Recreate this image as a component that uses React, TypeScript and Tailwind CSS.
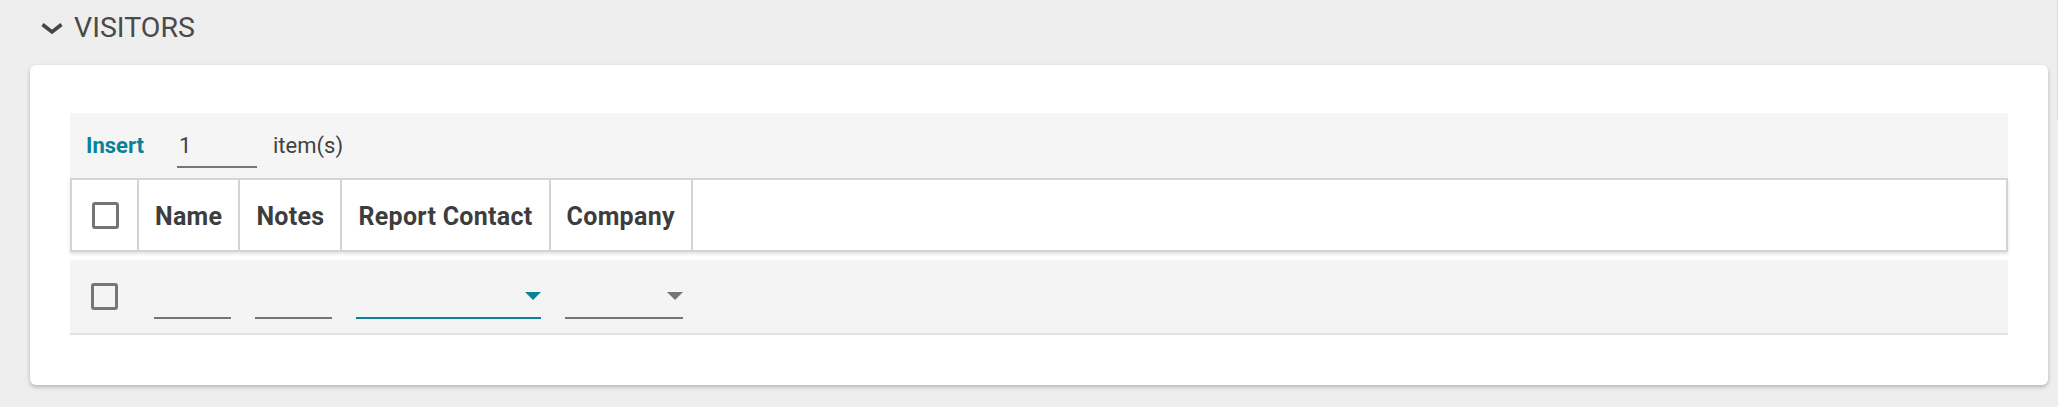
import { useState } from "react";

const TEAL = "#0b8197";

function Checkbox() {
  return (
    <div className="w-[27px] h-[27px] border-[3px] border-[#757575] rounded-[3px] bg-transparent" />
  );
}

function SelectField({ width, active }: { width: string; active?: boolean }) {
  return (
    <div
      className={`${width} h-[44px] flex items-center justify-end border-b-2 ${
        active ? "border-[#0b8197]" : "border-[#757575]"
      }`}
    >
      <div
        className={`w-0 h-0 border-l-[8px] border-r-[8px] border-t-[8px] border-l-transparent border-r-transparent ${
          active ? "border-t-[#0b8197]" : "border-t-[#757575]"
        }`}
      />
    </div>
  );
}

export default function App() {
  const [count, setCount] = useState("1");
  const columns = ["Name", "Notes", "Report Contact", "Company"];

  return (
    <div className="relative min-h-[407px] bg-[#eeeeee] font-['Roboto',sans-serif] text-[#424242]">
      {/* scrollbar edge */}
      <div className="absolute right-0 top-0 w-px h-[120px] bg-[#dcdcdc]" />

      {/* Section title */}
      <div className="h-[56px] flex items-center pl-[40px] gap-[10px]">
        <svg width="24" height="13" viewBox="0 0 24 13" fill="none">
          <polyline
            points="2.5,2.5 12,10 21.5,2.5"
            stroke="#454545"
            strokeWidth="3.6"
            fill="none"
          />
        </svg>
        <span className="text-[28.5px] leading-[32px] text-[#4a4a4a]">VISITORS</span>
      </div>

      {/* Card */}
      <div className="ml-[30px] mr-[10px] mt-[9px] bg-white rounded-[6px] shadow-[0_2px_4px_rgba(0,0,0,0.25)] pt-[48px] px-[40px] pb-[50px]">
        {/* Insert bar */}
        <div className="h-[65px] bg-[#f5f5f5] flex items-center pl-[16px]">
          <span className="text-[22px] font-bold" style={{ color: TEAL }}>
            Insert
          </span>
          <input
            value={count}
            onChange={(e) => setCount(e.target.value)}
            className="ml-[33px] w-[80px] h-[45px] pl-[2px] pt-[1px] bg-transparent border-b-2 border-[#757575] text-[22px] text-[#424242] outline-none"
          />
          <span className="ml-[16px] text-[22px] text-[#424242]">item(s)</span>
        </div>

        {/* Header */}
        <div className="flex h-[74px] border-2 border-[#d4d4d4] bg-white shadow-[0_2px_3px_rgba(0,0,0,0.12)]">
          <div className="w-[67px] flex items-center justify-center border-r-2 border-[#d4d4d4] pl-[2px]">
            <Checkbox />
          </div>
          {columns.map((c) => (
            <div
              key={c}
              className="flex items-center px-[16px] pt-[3px] border-r-2 border-[#d4d4d4] text-[25px] tracking-[0.3px] font-bold text-[#3d3d3d]"
            >
              {c}
            </div>
          ))}
          <div className="flex-1" />
        </div>

        {/* Data row */}
        <div className="mt-[8px] h-[75px] bg-[#f4f4f4] border-b-2 border-[#e2e2e2] flex items-center pl-[21px]">
          <Checkbox />
          <div className="ml-[36px] w-[77px] h-[44px] border-b-2 border-[#757575]" />
          <div className="ml-[24px] w-[77px] h-[44px] border-b-2 border-[#757575]" />
          <div className="ml-[24px]">
            <SelectField width="w-[185px]" active />
          </div>
          <div className="ml-[24px]">
            <SelectField width="w-[118px]" />
          </div>
        </div>
      </div>
    </div>
  );
}
